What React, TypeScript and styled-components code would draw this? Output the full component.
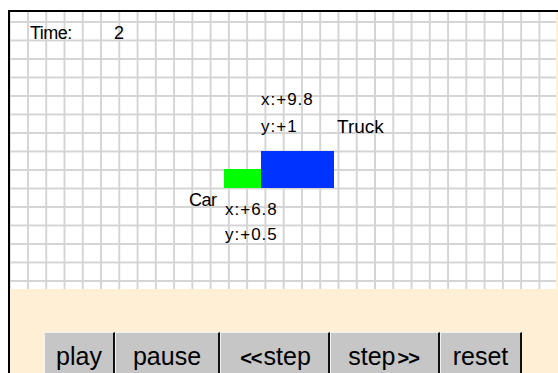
import styled, { createGlobalStyle } from "styled-components";

const GlobalStyle = createGlobalStyle`
  html, body {
    margin: 0;
    padding: 0;
    background: #fff;
    overflow: hidden;
  }
  body {
    font-family: "Liberation Sans", Arial, sans-serif;
  }
`;

type Label = { text: string; x: number; y: number; size: number; spacing: number };

const labels: Label[] = [
  { text: "Time:", x: 20, y: 12, size: 18, spacing: -0.5 },
  { text: "2", x: 104, y: 12, size: 18, spacing: 0 },
  { text: "x:+9.8", x: 251, y: 79, size: 17, spacing: 1 },
  { text: "y:+1", x: 251, y: 106, size: 17, spacing: 1 },
  { text: "Truck", x: 327, y: 105, size: 19, spacing: 0 },
  { text: "Car", x: 179, y: 179, size: 18, spacing: -0.5 },
  { text: "x:+6.8", x: 215, y: 189, size: 17, spacing: 1 },
  { text: "y:+0.5", x: 215, y: 214, size: 17, spacing: 1 },
];

const vehicles = [
  { name: "truck", x: 251, y: 139, w: 73, h: 37, color: "#0033ff" },
  { name: "car", x: 214, y: 157, w: 37, h: 19, color: "#00ff00" },
];

const controls = [
  { label: "play", width: 71 },
  { label: "pause", width: 105 },
  { label: "step", width: 110, prefix: "<<" },
  { label: "step", width: 110, suffix: ">>" },
  { label: "reset", width: 82 },
];

export default function App() {
  return (
    <>
      <GlobalStyle />
      <Page>
        <Applet>
          <Canvas>
            {labels.map((l, i) => (
              <CanvasText key={i} $x={l.x} $y={l.y} $size={l.size} $spacing={l.spacing}>
                {l.text}
              </CanvasText>
            ))}
            {vehicles.map((v) => (
              <Vehicle key={v.name} $x={v.x} $y={v.y} $w={v.w} $h={v.h} $color={v.color} />
            ))}
          </Canvas>
          <Controls>
            {controls.map((c, i) => (
              <ControlButton key={i} $w={c.width}>
                {c.prefix && <Arrows>{c.prefix}</Arrows>}
                {c.label}
                {c.suffix && <Arrows>{c.suffix}</Arrows>}
              </ControlButton>
            ))}
          </Controls>
        </Applet>
      </Page>
    </>
  );
}

const Page = styled.div`
  height: 373px;
  box-sizing: border-box;
  padding: 10px 0 0 8px;
  overflow: hidden;
`;

const Applet = styled.div`
  width: 550px;
  height: 363px;
  box-sizing: border-box;
  border-top: 2px solid #000;
  border-left: 2px solid #000;
  background: #ffefd5;
  display: flex;
  flex-direction: column;
`;

const Canvas = styled.div`
  position: relative;
  width: 546px;
  height: 277px;
  flex-shrink: 0;
  background-color: #fff;
  background-image:
    linear-gradient(to right, #d4d4d4 2px, transparent 2px),
    linear-gradient(to bottom, #d4d4d4 2px, transparent 2px);
  background-size: 18.28px 100%, 100% 18.5px;
  background-position: 17px 0, 0 9px;
`;

const CanvasText = styled.span<{ $x: number; $y: number; $size: number; $spacing: number }>`
  position: absolute;
  left: ${({ $x }) => $x}px;
  top: ${({ $y }) => $y}px;
  font-size: ${({ $size }) => $size}px;
  letter-spacing: ${({ $spacing }) => $spacing}px;
  line-height: 1;
  color: #000;
  white-space: nowrap;
`;

const Vehicle = styled.div<{ $x: number; $y: number; $w: number; $h: number; $color: string }>`
  position: absolute;
  left: ${({ $x }) => $x}px;
  top: ${({ $y }) => $y}px;
  width: ${({ $w }) => $w}px;
  height: ${({ $h }) => $h}px;
  background: ${({ $color }) => $color};
`;

const Controls = styled.div`
  display: flex;
  align-items: flex-start;
  padding: 43px 0 0 34px;
`;

const ControlButton = styled.button<{ $w: number }>`
  appearance: none;
  margin: 0;
  width: ${({ $w }) => $w}px;
  box-sizing: border-box;
  padding: 11px 0;
  display: block;
  text-align: center;
  background: #c6c6c6;
  border: none;
  border-top: 1px solid #f2f2f2;
  border-left: 1px solid #f2f2f2;
  border-right: 2px solid #111;
  font-family: "Liberation Sans", Arial, sans-serif;
  font-size: 25px;
  line-height: 25px;
  color: #000;
  white-space: nowrap;
  cursor: pointer;
`;

const Arrows = styled.span`
  font-size: 20px;
  font-weight: bold;
  line-height: 20px;
  letter-spacing: -1px;
  margin: 0 2px;
`;
